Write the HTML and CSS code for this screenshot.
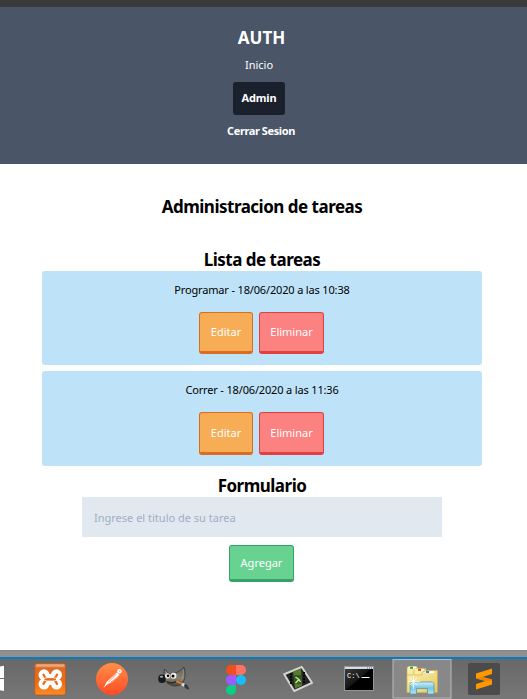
FILE: index.html
```html
<!DOCTYPE html>
<html lang="es">
<head>
<meta charset="utf-8">
<title>Administracion de tareas</title>
<link rel="stylesheet" href="styles.css">
</head>
<body>
<header class="header">
  <div class="brand">AUTH</div>
  <nav class="nav">
    <a class="link">Inicio</a>
    <a class="link active">Admin</a>
    <a class="link strong">Cerrar Sesion</a>
  </nav>
</header>
<main class="main">
  <h1 class="title">Administracion de tareas</h1>
  <section class="tasks">
    <h2 class="subtitle">Lista de tareas</h2>
    <article class="card">
      <p class="task">Programar - 18/06/2020 a las 10:38</p>
      <div class="actions"><button class="btn edit">Editar</button><button class="btn delete">Eliminar</button></div>
    </article>
    <article class="card tall">
      <p class="task">Correr - 18/06/2020 a las 11:36</p>
      <div class="actions"><button class="btn edit">Editar</button><button class="btn delete">Eliminar</button></div>
    </article>
  </section>
  <form class="form">
    <h2 class="subtitle">Formulario</h2>
    <input class="field" type="text" placeholder="Ingrese el titulo de su tarea">
    <button class="btn add" type="button">Agregar</button>
  </form>
</main>
<footer class="dock">
  <div class="strip"></div>
  <div class="taskbar">
    <svg class="icons" width="527" height="40" viewBox="0 659 527 40">
      <defs>
        <linearGradient id="xo" x2="0" y2="1"><stop stop-color="#e8a071"/><stop offset=".16" stop-color="#db6b24"/><stop offset=".6" stop-color="#ee6c13"/><stop offset="1" stop-color="#ff8b24"/></linearGradient>
        <linearGradient id="po" x2="0" y2="1"><stop stop-color="#ff9048"/><stop offset="1" stop-color="#ff4a26"/></linearGradient>
        <linearGradient id="fur" x2="0" y2="1"><stop stop-color="#5e5b54"/><stop offset=".6" stop-color="#8a8373"/><stop offset="1" stop-color="#49453e"/></linearGradient>
        <linearGradient id="fold" x2="1" y2="1"><stop stop-color="#fff3b0"/><stop offset="1" stop-color="#e5c660"/></linearGradient>
        <linearGradient id="glass" x2="0" y2="1"><stop stop-color="#d4f2fb"/><stop offset=".5" stop-color="#79c4df"/><stop offset="1" stop-color="#b9e6f5"/></linearGradient>
        <linearGradient id="cmd" x2="1" y2="1"><stop stop-color="#414141"/><stop offset=".5" stop-color="#151515"/><stop offset=".52" stop-color="#000"/></linearGradient>
      </defs>
      <path fill="#fff" d="M0 666.5l4-.7V678H0zM0 679h4v12l-4-.7z"/>
      <g>
        <rect x="34.7" y="663.5" width="31" height="31.500" rx="2.500" fill="url(#xo)" stroke="#b65319" stroke-width=".7"/>
        <path d="M36.500 664.800h27.500v1.800h-27.500z" fill="#f1b18a" opacity=".75"/>
        <g fill="#fff">
          <circle cx="44" cy="674.800" r="5.500"/><circle cx="56.500" cy="674.800" r="5.500"/>
          <circle cx="44" cy="684" r="5.500"/><circle cx="56.500" cy="684" r="5.500"/>
          <path d="M45 674h10v11h-10z"/>
        </g>
        <path d="M43.500 674.500c.5 2 2 2.800 2.500 4.800-.5 2-2 2.800-2.500 4.700M57 674.500c-.5 2-2 2.800-2.500 4.800.5 2 2 2.800 2.500 4.700M46 679.300h8.500" fill="none" stroke="#ec6a15" stroke-width="2.200" stroke-linecap="round"/>
        <circle cx="45.300" cy="679.300" r="1.800" fill="#fff"/><circle cx="55.300" cy="679.300" r="1.800" fill="#fff"/>
        <path d="M44.500 679.300h11.500" stroke="#ec6a15" stroke-width="1.800"/>
      </g>
      <g>
        <circle cx="112" cy="679" r="16" fill="url(#po)"/>
        <circle cx="119.500" cy="671.300" r="2.200" fill="#fff"/>
        <path d="M117 672.500l2.500 2-2 3-5.500 4.500-5 2.500-3.500 3.500 3-6z" fill="#fff"/>
        <path d="M116.500 674l-8 8M119 676l-8 6" stroke="#ff6b37" stroke-width=".7"/>
        <circle cx="119.800" cy="671" r=".7" fill="#ff7940"/>
      </g>
      <g>
        <path d="M164.500 669l4 4.500c5 1 10-1 15.500-6.500 2 6 1.300 14-2.500 17-4.500 3.500-11 2-15-1.500-2.500-2.500-3.500-7-2-13.500z" fill="url(#fur)" stroke="#3b3a37" stroke-width=".8"/>
        <path d="M165 671l3 3M183 669c1 5 0 9-2 12" stroke="#aaa397" stroke-width=".7" fill="none"/>
        <ellipse cx="162" cy="678.700" rx="3.800" ry="4.300" fill="#151b20"/>
        <ellipse cx="161.500" cy="676.700" rx="1.600" ry="1" fill="#a6b1bb"/>
        <circle cx="167.500" cy="675.800" r="2.600" fill="#e7e7e5"/><circle cx="173.500" cy="675.800" r="3" fill="#f2f2ef"/>
        <circle cx="168" cy="675.800" r="1.300"/><circle cx="173" cy="676" r="1.500"/>
        <path d="M167 681.500c3 2 6 2 9 0" stroke="#292722" stroke-width="1.500" fill="none"/>
        <path d="M176.500 681.200l6 3" stroke="#e17a25" stroke-width="2"/><path d="M182 684l3 1.700" stroke="#d9dddd" stroke-width="3"/>
        <path d="M185 684c2 0 3 2 4.500 5.500-3 0-5-1.500-5.500-4z" fill="#343b3c"/>
      </g>
      <g>
        <path d="M236 665h-5a5 5 0 0 0 0 10h5z" fill="#f24e1e"/>
        <path d="M236 665h5a5 5 0 0 1 0 10h-5z" fill="#ff7262"/>
        <path d="M236 675h-5a5 5 0 0 0 0 10h5z" fill="#a259ff"/>
        <circle cx="241" cy="680" r="5" fill="#1abcfe"/>
        <path d="M236 685h-5a5 5 0 1 0 5 5z" fill="#0acf83"/>
      </g>
      <g>
        <path d="M284.200 674.200L301.800 667l10.200 15.800-17.800 8.200z" fill="#242822" stroke="#d4d4d4" stroke-width="2" stroke-linejoin="round"/>
        <path d="M293 671.500l8-3 1 17-7 3z" fill="#587a2d"/>
        <path d="M294 675h7v9h-7z" fill="#355821"/>
        <path d="M291 673v12M304 672v12" stroke="#070a06" stroke-width="2" stroke-dasharray="2 1"/>
        <path d="M295.500 677l3.500 2.500-3.500 3.500M299 679.500l1.500 2.500" fill="none" stroke="#c9ebaa" stroke-width="1.300"/>
      </g>
      <g>
        <rect x="344.500" y="666.500" width="29" height="24" fill="url(#cmd)" stroke="#92979d"/>
        <path d="M345 667h28v2h-28z" fill="#d7dce0"/><path d="M367 668h5" stroke="#5a67a5" stroke-dasharray="1 1"/>
        <text class="prompt" x="347" y="677.500">C:\</text>
        <path d="M361.500 677.500h8" stroke="#fff"/>
      </g>
      <g>
        <rect x="393" y="659.500" width="58" height="38.500" fill="#888" stroke="#b9b9b9"/>
        <path d="M407 668l1-1.500h9l1 2h8v24h-19z" fill="url(#fold)" stroke="#cba94b" stroke-width=".6"/>
        <path d="M414 670l1-1.500h9l1 2h9v22h-20z" fill="url(#fold)" stroke="#cba94b" stroke-width=".6"/>
        <path d="M422 673l1-1.500h7l1-1h6.500v22h-30.500v-17.500h15z" fill="url(#fold)" stroke="#cba94b" stroke-width=".6"/>
        <path d="M409 667.500h7" stroke="#fff" stroke-width="1.800"/><path d="M410 667.800h3" stroke="#13b332" stroke-width="2"/>
        <path d="M417 669.700h7" stroke="#fff" stroke-width="1.500"/><path d="M418 669.800h3" stroke="#d4471e" stroke-width="2"/>
        <path d="M425 672.200h9" stroke="#fff" stroke-width="1.800"/><path d="M426 672h3" stroke="#128edd" stroke-width="2"/>
        <path d="M410 694v-9c0-2 1-3 3-3h18c2 0 3 1 3 3v9h-6.500v-5.500h-11v5.500z" fill="url(#glass)" stroke="#489db9" stroke-width=".8"/>
        <path d="M413.500 675v14M408 681.500h12M410 678l7 7M417 678l-7 7" stroke="#fff" stroke-width=".7"/>
      </g>
      <g>
        <rect x="468" y="663" width="32" height="32" rx="2" fill="#4b4b4b"/>
        <path d="M476 673.500l16-5v5.500l-9.500 3 9.500 2.500v5l-16 5v-5.500l9.500-3-9.500-2.500z" fill="#ff9800"/>
        <path d="M476 678.500l6.500-1.500 9.500 2.500v1l-6.500.5z" fill="#e98500"/>
      </g>
    </svg>
  </div>
</footer>
</body>
</html>
```
FILE: styles.css
```css
* { box-sizing: border-box; }
body {
  margin: 0;
  height: 699px;
  display: flex;
  flex-direction: column;
  overflow: hidden;
  background: #fff;
  color: #000;
  font: 11px/16px "Noto Sans", "Open Sans", sans-serif;
}
h1, h2, p { margin: 0; }
.header {
  height: 164px;
  border-top: 7px solid #3a3a3a;
  background: #4a5568;
  color: #fff;
  padding: 19px 4px 0 0;
  text-align: center;
}
.brand { font-size: 17px; line-height: 24px; font-weight: 700; }
.nav { display: flex; flex-direction: column; align-items: center; margin-top: 7px; padding-right: 5px; }
.link.active {
  width: 52px;
  height: 33px;
  line-height: 32px;
  margin: 9px 0 8px;
  border-radius: 3px;
  background: #1a202c;
  font-weight: 700;
  letter-spacing: -.1px;
}
.link.strong { font-weight: 700; letter-spacing: -.4px; margin-left: 4px; }
.main { flex: 1; padding: 31px 45px 0 42px; text-align: center; }
.title, .subtitle { font-size: 17px; line-height: 24px; font-weight: 700; letter-spacing: -.5px; }
.tasks { margin-top: 29px; }
.tasks .subtitle { margin-bottom: -1px; }
.task { letter-spacing: -.16px; }
.card { height: 94px; margin-bottom: 6px; padding-top: 11px; border-radius: 3px; background: #bee3f8; }
.card.tall { height: 95px; }
.actions { display: flex; justify-content: center; gap: 6px; margin: 14px 1px 0 0; }
.btn {
  height: 42px;
  padding: 0;
  border: 1px solid;
  border-bottom-width: 3px;
  border-radius: 3px;
  color: #fff;
  font: inherit;
}
.tall .btn { height: 43px; }
.edit { width: 54px; background: #f6ad55; border-color: #dd6b20; }
.delete { width: 65px; background: #fc8181; border-color: #e53e3e; }
.form { display: flex; flex-direction: column; align-items: center; margin-top: 8px; }
.form .subtitle { margin-bottom: -1px; }
.field {
  width: 360px;
  height: 40px;
  padding: 0 12px;
  border: 0;
  background: #e2e8f0;
  font: inherit;
}
.field::placeholder { color: #a0aec0; opacity: 1; }
.add { width: 65px; height: 37px; margin: 8px 1px 0 0; background: #68d391; border-color: #38a169; }
.strip { height: 7px; background: #909090; border-top: 1px solid #858585; }
.taskbar { height: 42px; border-top: 2px solid #087cc0; background: linear-gradient(#686868, #777); }
.icons { display: block; }
.prompt { font: 7px "Liberation Mono", monospace; fill: #fff; }
```
